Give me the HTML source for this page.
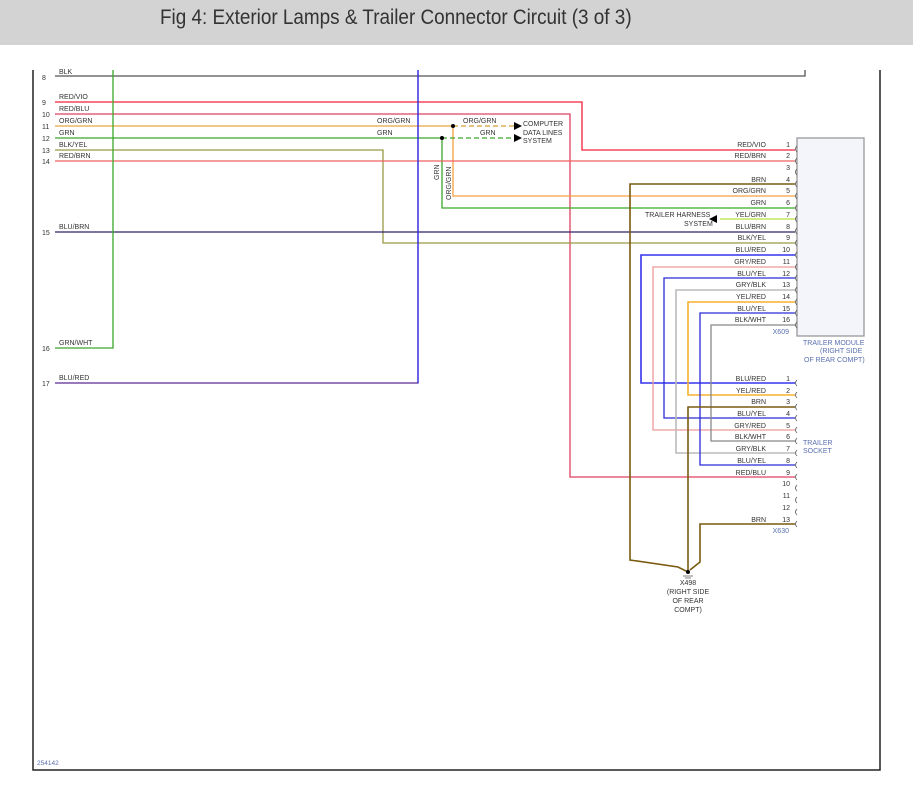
<!DOCTYPE html>
<html><head><meta charset="utf-8"><style>
body{margin:0;background:#fff;width:913px;height:790px;overflow:hidden}
.hd{position:absolute;left:0;top:0;width:913px;height:45px;background:#d3d3d3}
.hd span{position:absolute;left:160px;top:6px;font-family:"Liberation Sans Narrow","Liberation Sans",sans-serif;font-size:21px;color:#333;transform:scaleX(0.9);transform-origin:0 0;white-space:nowrap}
svg{position:absolute;left:0;top:0}
text{font-family:"Liberation Sans",sans-serif;font-size:7px;fill:#333}
.b{fill:#5a6fb0}
</style></head><body>
<div class="hd"><span>Fig 4: Exterior Lamps &amp; Trailer Connector Circuit (3 of 3)</span></div>
<svg width="913" height="790" viewBox="0 0 913 790" fill="none" stroke-width="1.3">
<path d="M33 70V770H880V70" stroke="#222" stroke-width="1.5"/>
<path d="M55 76H805V70" stroke="#555"/>
<path d="M55 102H582V150H795" stroke="#f0203a"/>
<path d="M55 114H570V477H795" stroke="#e04060"/>
<path d="M55 126H453" stroke="#e8a840"/>
<path d="M453 126V196H795" stroke="#f5a040"/>
<path d="M55 138H442V208H795" stroke="#3aa82a"/>
<path d="M55 150H383V243H795" stroke="#999944"/>
<path d="M55 161H795" stroke="#f06060"/>
<path d="M55 232H795" stroke="#332266"/>
<path d="M55 348H113V70" stroke="#3aa82a"/>
<path d="M55 383H418V70" stroke="#5a2a90"/>
<path d="M418 70V383" stroke="#3333ee"/>
<path d="M453 126H515" stroke="#d0a030" stroke-dasharray="5,3"/>
<path d="M442 138H515" stroke="#3aa82a" stroke-dasharray="5,3"/>
<path d="M514 122L522 126L514 130Z M514 134L522 138L514 142Z" fill="#000" stroke="none"/>
<circle cx="453" cy="126" r="2" fill="#000" stroke="none"/>
<circle cx="442" cy="138" r="2" fill="#000" stroke="none"/>
<path d="M795 184H630V560L678 567L688 572" stroke="#7a5a10" stroke-width="1.6"/>
<path d="M720 219H795" stroke="#b8e040"/>
<path d="M717 215L709 219L717 223Z" fill="#000" stroke="none"/>
<path d="M795 255H641V383H795" stroke="#3333ee" stroke-width="1.6"/>
<path d="M795 267H653V430H795" stroke="#ee9999"/>
<path d="M795 278H664V418H795" stroke="#2a2ad8"/>
<path d="M795 290H676V453H795" stroke="#bbbbbb" stroke-width="1.6"/>
<path d="M795 302H688V395H795" stroke="#f5b030" stroke-width="1.6"/>
<path d="M795 313H700V465H795" stroke="#2a2ad8"/>
<path d="M795 325H711V441H795" stroke="#888"/>
<path d="M795 407H688V572" stroke="#7a5a10" stroke-width="1.6"/>
<path d="M795 524H700V562L690 570" stroke="#7a5a10" stroke-width="1.6"/>
<circle cx="688" cy="572" r="2" fill="#000" stroke="none"/>
<path d="M683 576H693M685 578H691" stroke="#555" stroke-width="0.8"/>
<rect x="797" y="138" width="67" height="198" fill="#f4f4fb" stroke="#999"/>
<g stroke="#555" stroke-width="0.8">
<path d="M797 146q-3 3 0 6M797 158q-3 3 0 6M797 169q-3 3 0 6M797 181q-3 3 0 6M797 193q-3 3 0 6M797 205q-3 3 0 6M797 216q-3 3 0 6M797 228q-3 3 0 6M797 240q-3 3 0 6M797 252q-3 3 0 6M797 264q-3 3 0 6M797 275q-3 3 0 6M797 287q-3 3 0 6M797 299q-3 3 0 6M797 310q-3 3 0 6M797 322q-3 3 0 6"/>
<path d="M797 380q-3 3 0 6M797 392q-3 3 0 6M797 404q-3 3 0 6M797 415q-3 3 0 6M797 427q-3 3 0 6M797 438q-3 3 0 6M797 450q-3 3 0 6M797 462q-3 3 0 6M797 474q-3 3 0 6M797 485q-3 3 0 6M797 497q-3 3 0 6M797 509q-3 3 0 6M797 521q-3 3 0 6"/>
</g>
<g>
<text x="42" y="80">8</text><text x="59" y="74">BLK</text>
<text x="42" y="105">9</text><text x="59" y="99">RED/VIO</text>
<text x="42" y="117">10</text><text x="59" y="111">RED/BLU</text>
<text x="42" y="129">11</text><text x="59" y="123">ORG/GRN</text>
<text x="42" y="141">12</text><text x="59" y="135">GRN</text>
<text x="42" y="153">13</text><text x="59" y="147">BLK/YEL</text>
<text x="42" y="164">14</text><text x="59" y="158">RED/BRN</text>
<text x="42" y="235">15</text><text x="59" y="229">BLU/BRN</text>
<text x="42" y="351">16</text><text x="59" y="345">GRN/WHT</text>
<text x="42" y="386">17</text><text x="59" y="380">BLU/RED</text>
<text x="377" y="123">ORG/GRN</text><text x="377" y="135">GRN</text>
<text x="463" y="123">ORG/GRN</text><text x="480" y="135">GRN</text>
<text x="523" y="126">COMPUTER</text><text x="523" y="135">DATA LINES</text><text x="523" y="143">SYSTEM</text>
<text transform="translate(439,180) rotate(-90)">GRN</text>
<text transform="translate(451,200) rotate(-90)">ORG/GRN</text>
<text x="645" y="217">TRAILER HARNESS</text><text x="684" y="226">SYSTEM</text>
</g>
<g text-anchor="end">
<text x="766" y="147">RED/VIO</text><text x="766" y="158">RED/BRN</text><text x="766" y="182">BRN</text><text x="766" y="193">ORG/GRN</text><text x="766" y="205">GRN</text><text x="766" y="217">YEL/GRN</text><text x="766" y="229">BLU/BRN</text><text x="766" y="240">BLK/YEL</text><text x="766" y="252">BLU/RED</text><text x="766" y="264">GRY/RED</text><text x="766" y="276">BLU/YEL</text><text x="766" y="287">GRY/BLK</text><text x="766" y="299">YEL/RED</text><text x="766" y="311">BLU/YEL</text><text x="766" y="322">BLK/WHT</text>
<text x="766" y="381">BLU/RED</text><text x="766" y="393">YEL/RED</text><text x="766" y="404">BRN</text><text x="766" y="416">BLU/YEL</text><text x="766" y="428">GRY/RED</text><text x="766" y="439">BLK/WHT</text><text x="766" y="451">GRY/BLK</text><text x="766" y="463">BLU/YEL</text><text x="766" y="475">RED/BLU</text><text x="766" y="522">BRN</text>
<text x="790" y="147">1</text><text x="790" y="158">2</text><text x="790" y="170">3</text><text x="790" y="182">4</text><text x="790" y="193">5</text><text x="790" y="205">6</text><text x="790" y="217">7</text><text x="790" y="229">8</text><text x="790" y="240">9</text><text x="790" y="252">10</text><text x="790" y="264">11</text><text x="790" y="276">12</text><text x="790" y="287">13</text><text x="790" y="299">14</text><text x="790" y="311">15</text><text x="790" y="322">16</text>
<text x="790" y="381">1</text><text x="790" y="393">2</text><text x="790" y="404">3</text><text x="790" y="416">4</text><text x="790" y="428">5</text><text x="790" y="439">6</text><text x="790" y="451">7</text><text x="790" y="463">8</text><text x="790" y="475">9</text><text x="790" y="486">10</text><text x="790" y="498">11</text><text x="790" y="510">12</text><text x="790" y="522">13</text>
<text x="789" y="334" class="b">X609</text><text x="789" y="533" class="b">X630</text>
</g>
<text x="803" y="345" class="b">TRAILER MODULE</text><text x="820" y="353" class="b">(RIGHT SIDE</text><text x="804" y="362" class="b">OF REAR COMPT)</text>
<text x="803" y="445" class="b">TRAILER</text><text x="803" y="453" class="b">SOCKET</text>
<g text-anchor="middle"><text x="688" y="585">X498</text><text x="688" y="594">(RIGHT SIDE</text><text x="688" y="603">OF REAR</text><text x="688" y="612">COMPT)</text></g>
<text x="37" y="765" class="b" style="font-size:6.5px">254142</text>
</svg>
</body></html>
